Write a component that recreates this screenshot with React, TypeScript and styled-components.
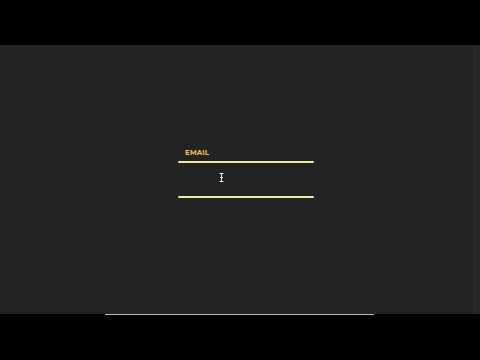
import styled, { createGlobalStyle } from "styled-components";

const GlobalStyle = createGlobalStyle`
  html, body {
    margin: 0;
    padding: 0;
    background: #000;
    font-family: "Montserrat", "Lato", "Liberation Sans", sans-serif;
  }
`;

const Frame = styled.div`
  width: 480px;
  height: 360px;
  display: flex;
  flex-direction: column;
  background: #000;
  overflow: hidden;
`;

const Letterbox = styled.div`
  height: 45px;
  flex-shrink: 0;
  background: #000;
`;

const Stage = styled.div`
  height: 269px;
  flex-shrink: 0;
  display: flex;
  padding-left: 178px;
  background: #232323;
  border-right: 5px solid #262626;
  box-shadow: inset -1px 0 0 #2c2c2c;
`;

const Form = styled.div`
  width: 136px;
  margin-top: 103px;
  display: flex;
  flex-direction: column;
`;

const Label = styled.label`
  padding-left: 7px;
  font-size: 7px;
  font-weight: 700;
  letter-spacing: 0.2px;
  line-height: 10px;
  color: #f2c744;
  margin-bottom: 3px;
`;

const Rule = styled.div`
  height: 2px;
  background: #ecec9c;
  border-radius: 1px;
`;

const Field = styled.div`
  position: relative;
  height: 33px;
`;

const Cursor = styled.svg`
  position: absolute;
  left: 41px;
  top: 10px;
`;

const Bottom = styled.div`
  flex: 1;
  display: flex;
  justify-content: center;
  background: #000;
`;

const Progress = styled.div`
  width: 269px;
  height: 1px;
  margin-left: -1px;
  background: #b5b5b5;
`;

export default function App() {
  return (
    <Frame>
      <GlobalStyle />
      <Letterbox />
      <Stage>
        <Form>
          <Label>EMAIL</Label>
          <Rule />
          <Field>
            <Cursor width="5" height="9" viewBox="0 0 5 9">
              <path d="M0.5 0.5h4M2.5 0.5v8M0.5 8.5h4M1 4.5h3" stroke="#e8e8e8" strokeWidth="1" fill="none" />
            </Cursor>
          </Field>
          <Rule />
        </Form>
      </Stage>
      <Bottom>
        <Progress />
      </Bottom>
    </Frame>
  );
}
